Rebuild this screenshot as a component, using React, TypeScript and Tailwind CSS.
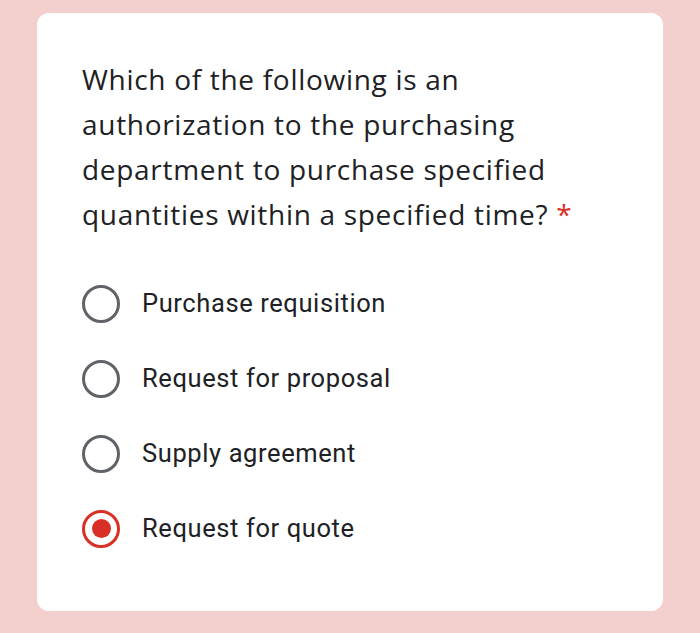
import { useState } from "react";

const options = [
  "Purchase requisition",
  "Request for proposal",
  "Supply agreement",
  "Request for quote",
];

function Radio({ checked }: { checked: boolean }) {
  return (
    <span
      className={`flex h-[38px] w-[38px] shrink-0 items-center justify-center rounded-full border-[3px] ${
        checked ? "border-[#d93025]" : "border-[#5f6368]"
      }`}
    >
      {checked && <span className="h-[19px] w-[19px] rounded-full bg-[#d93025]" />}
    </span>
  );
}

export default function App() {
  const [selected, setSelected] = useState(3);

  return (
    <div className="min-h-[633px] bg-[#f3d0ce] pt-[13px] pb-[23px]">
      <div className="mx-[37px] rounded-[12px] bg-white px-[45px] pt-[44px] pb-[45px]">
        <p
          className="text-[28px] leading-[45px] tracking-[0.7px] text-[#202124]"
          style={{ fontFamily: '"Open Sans", Roboto, sans-serif' }}
        >
          Which of the following is an authorization to the purchasing department to purchase specified
          quantities within a specified time? <span className="text-[#d93025]">*</span>
        </p>
        <div className="mt-[29px] flex flex-col">
          {options.map((opt, i) => (
            <button
              key={opt}
              type="button"
              onClick={() => setSelected(i)}
              className="flex h-[75px] items-center gap-[22px] text-left"
            >
              <Radio checked={selected === i} />
              <span
                className="text-[25.5px] tracking-[0.6px] text-[#202124]"
                style={{ fontFamily: "Roboto, sans-serif" }}
              >
                {opt}
              </span>
            </button>
          ))}
        </div>
      </div>
    </div>
  );
}
